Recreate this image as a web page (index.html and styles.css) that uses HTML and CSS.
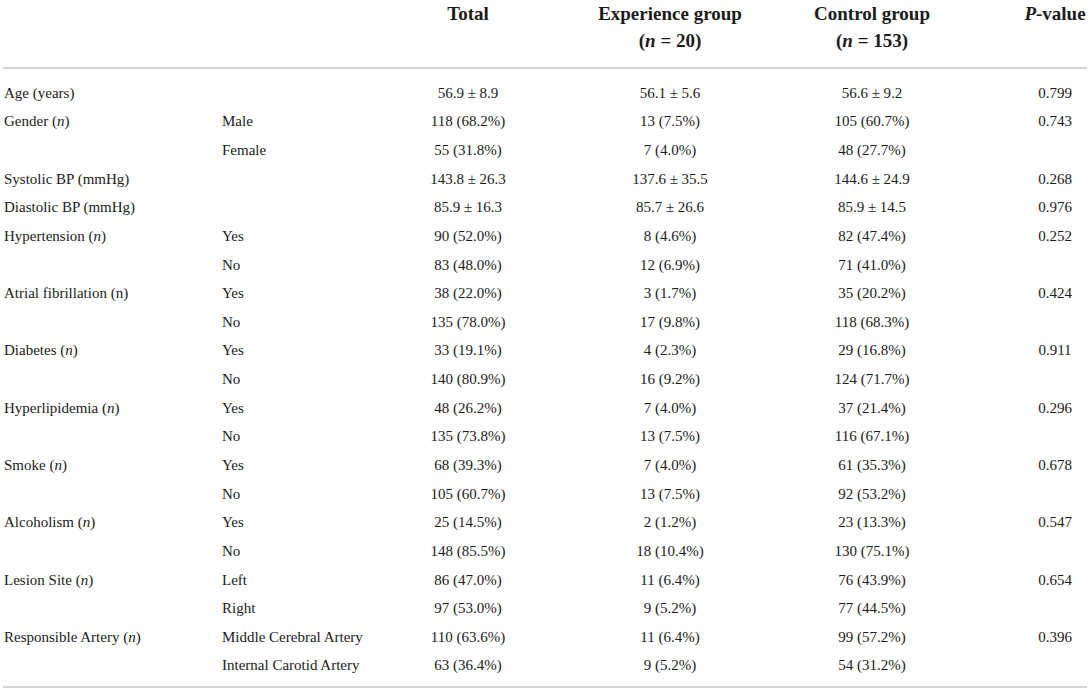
FILE: index.html
```html
<!DOCTYPE html>
<html lang="en">
<head>
    <meta charset="UTF-8">
    <title>Baseline characteristics</title>
    <link rel="stylesheet" href="styles.css">
</head>
<body>
    <table class="stats">
        <colgroup>
            <col class="c-label">
            <col class="c-sub">
            <col class="c-total">
            <col class="c-exp">
            <col class="c-ctrl">
            <col class="c-p">
        </colgroup>
        <thead>
            <tr>
                <th></th>
                <th></th>
                <th>Total<br>&nbsp;</th>
                <th>Experience group<br>(<i>n</i> = 20)</th>
                <th>Control group<br>(<i>n</i> = 153)</th>
                <th class="pval"><i>P</i>-value<br>&nbsp;</th>
            </tr>
        </thead>
        <tbody>
            <tr><td>Age (years)</td><td></td><td>56.9 ± 8.9</td><td>56.1 ± 5.6</td><td>56.6 ± 9.2</td><td class="pval">0.799</td></tr>
            <tr><td>Gender (<i>n</i>)</td><td>Male</td><td>118 (68.2%)</td><td>13 (7.5%)</td><td>105 (60.7%)</td><td class="pval">0.743</td></tr>
            <tr><td></td><td>Female</td><td>55 (31.8%)</td><td>7 (4.0%)</td><td>48 (27.7%)</td><td class="pval"></td></tr>
            <tr><td>Systolic BP (mmHg)</td><td></td><td>143.8 ± 26.3</td><td>137.6 ± 35.5</td><td>144.6 ± 24.9</td><td class="pval">0.268</td></tr>
            <tr><td>Diastolic BP (mmHg)</td><td></td><td>85.9 ± 16.3</td><td>85.7 ± 26.6</td><td>85.9 ± 14.5</td><td class="pval">0.976</td></tr>
            <tr><td>Hypertension (<i>n</i>)</td><td>Yes</td><td>90 (52.0%)</td><td>8 (4.6%)</td><td>82 (47.4%)</td><td class="pval">0.252</td></tr>
            <tr><td></td><td>No</td><td>83 (48.0%)</td><td>12 (6.9%)</td><td>71 (41.0%)</td><td class="pval"></td></tr>
            <tr><td>Atrial fibrillation (n)</td><td>Yes</td><td>38 (22.0%)</td><td>3 (1.7%)</td><td>35 (20.2%)</td><td class="pval">0.424</td></tr>
            <tr><td></td><td>No</td><td>135 (78.0%)</td><td>17 (9.8%)</td><td>118 (68.3%)</td><td class="pval"></td></tr>
            <tr><td>Diabetes (<i>n</i>)</td><td>Yes</td><td>33 (19.1%)</td><td>4 (2.3%)</td><td>29 (16.8%)</td><td class="pval">0.911</td></tr>
            <tr><td></td><td>No</td><td>140 (80.9%)</td><td>16 (9.2%)</td><td>124 (71.7%)</td><td class="pval"></td></tr>
            <tr><td>Hyperlipidemia (<i>n</i>)</td><td>Yes</td><td>48 (26.2%)</td><td>7 (4.0%)</td><td>37 (21.4%)</td><td class="pval">0.296</td></tr>
            <tr><td></td><td>No</td><td>135 (73.8%)</td><td>13 (7.5%)</td><td>116 (67.1%)</td><td class="pval"></td></tr>
            <tr><td>Smoke (<i>n</i>)</td><td>Yes</td><td>68 (39.3%)</td><td>7 (4.0%)</td><td>61 (35.3%)</td><td class="pval">0.678</td></tr>
            <tr><td></td><td>No</td><td>105 (60.7%)</td><td>13 (7.5%)</td><td>92 (53.2%)</td><td class="pval"></td></tr>
            <tr><td>Alcoholism (<i>n</i>)</td><td>Yes</td><td>25 (14.5%)</td><td>2 (1.2%)</td><td>23 (13.3%)</td><td class="pval">0.547</td></tr>
            <tr><td></td><td>No</td><td>148 (85.5%)</td><td>18 (10.4%)</td><td>130 (75.1%)</td><td class="pval"></td></tr>
            <tr><td>Lesion Site (<i>n</i>)</td><td>Left</td><td>86 (47.0%)</td><td>11 (6.4%)</td><td>76 (43.9%)</td><td class="pval">0.654</td></tr>
            <tr><td></td><td>Right</td><td>97 (53.0%)</td><td>9 (5.2%)</td><td>77 (44.5%)</td><td class="pval"></td></tr>
            <tr><td>Responsible Artery (<i>n</i>)</td><td>Middle Cerebral Artery</td><td>110 (63.6%)</td><td>11 (6.4%)</td><td>99 (57.2%)</td><td class="pval">0.396</td></tr>
            <tr><td></td><td>Internal Carotid Artery</td><td>63 (36.4%)</td><td>9 (5.2%)</td><td>54 (31.2%)</td><td class="pval"></td></tr>
        </tbody>
    </table>
</body>
</html>
```

FILE: styles.css
```css
* {
    margin: 0;
    padding: 0;
    box-sizing: border-box;
}

body {
    background: #fff;
    color: #1b1b1b;
    font-family: "Liberation Serif", "Times New Roman", serif;
}

/* Table */
.stats {
    margin-left: 3px;
    width: 1084px;
    table-layout: fixed;
    border-collapse: collapse;
    border-bottom: 2px solid #d4d4d4;
}

.c-label { width: 218px; }
.c-sub { width: 147px; }
.c-total { width: 200px; }
.c-exp { width: 204px; }
.c-ctrl { width: 200px; }
.c-p { width: 115px; }

.stats thead th {
    font-size: 19px;
    font-weight: bold;
    line-height: 27px;
    text-align: center;
    vertical-align: top;
    padding-bottom: 13px;
    border-bottom: 2px solid #d4d4d4;
    white-space: nowrap;
}

.stats td {
    font-size: 15px;
    height: 28.65px;
    line-height: 18px;
    text-align: center;
    white-space: nowrap;
}

.stats td:first-child {
    text-align: left;
    padding-left: 1px;
}

.stats td:nth-child(2) {
    text-align: left;
    padding-left: 1px;
}

.stats .pval {
    padding-left: 51px;
}

.stats tbody tr:first-child td {
    height: 39px;
    padding-top: 10px;
}

.stats tbody tr:last-child td {
    height: 35.5px;
    padding-bottom: 7px;
}
```
